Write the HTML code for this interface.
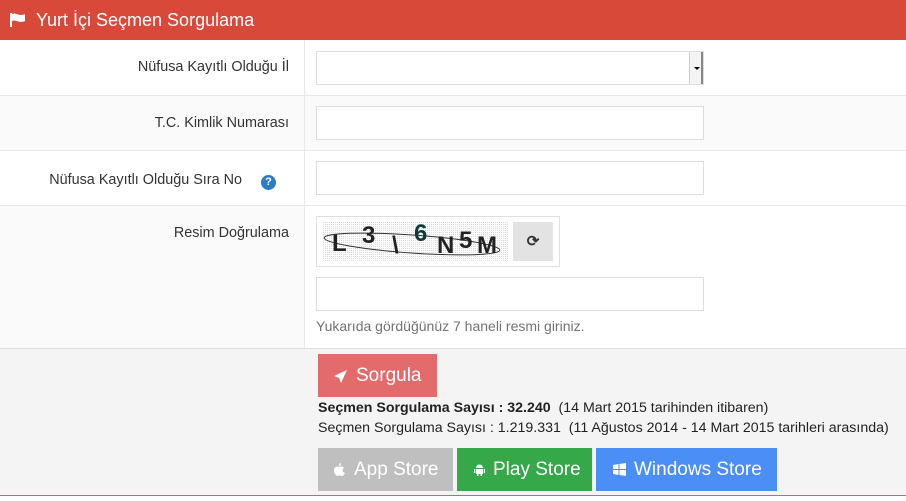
<!DOCTYPE html>
<html><head><meta charset="utf-8"><style>
*{box-sizing:border-box;margin:0;padding:0}
body{width:906px;height:501px;overflow:hidden;background:#fff;font-family:"Liberation Sans",sans-serif;color:#333;position:relative}
.hdr{position:absolute;left:0;top:0;width:906px;height:40px;background:#d9493a;color:#fff;font-size:18px;line-height:40px;padding-left:36px}
.row{position:absolute;left:0;width:906px;border-bottom:1px solid #e8e8e8}
.lab{position:absolute;left:0;width:305px;height:100%;border-right:1px solid #e8e8e8;text-align:right;font-size:14.4px;padding-right:15px}
.inp{position:absolute;left:316px;width:388px;height:34px;border:1px solid #ddd;background:#fff}
.foot{position:absolute;left:0;top:348px;width:906px;height:148px;background:#f4f4f4;border-top:1px solid #e0e0e0;border-bottom:1px solid #e06050}
.btn{position:absolute;color:#fff;font-size:19px;line-height:43px;height:43px}
.btn svg{position:absolute}
</style></head><body>
<div class="hdr"><svg style="position:absolute;left:10px;top:13px" width="16" height="14" viewBox="0 0 16 14"><rect x="0" y="0" width="2" height="14" fill="#fff"/><path d="M2 1C6 -1 9 4 15 1V8C9 11 6 6 2 8Z" fill="#fff"/></svg>Yurt İçi Seçmen Sorgulama</div>
<div class="row" style="top:40px;height:56px"><div class="lab" style="line-height:55px">Nüfusa Kayıtlı Olduğu İl</div>
<div class="inp" style="top:11px;height:34px"><div style="position:absolute;right:0;top:0;width:14px;height:32px;background:#f4f4f4;border-left:1px solid #ccc;border-right:2px solid #888"><div style="position:absolute;left:4px;top:15px;border:3px solid transparent;border-top:3px solid #000"></div></div></div></div>
<div class="row" style="top:96px;height:55px;background:#fafafa"><div class="lab" style="line-height:54px">T.C. Kimlik Numarası</div><div class="inp" style="top:10px"></div></div>
<div class="row" style="top:151px;height:55px"><div class="lab" style="line-height:58px;padding-right:62px">Nüfusa Kayıtlı Olduğu Sıra No</div>
<div style="position:absolute;left:261px;top:24px;width:15px;height:15px;border-radius:50%;background:#2b7bc9;color:#fff;font-size:11px;font-weight:bold;text-align:center;line-height:15px">?</div>
<div class="inp" style="top:10px"></div></div>
<div class="row" style="top:206px;height:142px;border-bottom:none"><div class="lab" style="background:#fafafa;padding-top:18px;line-height:18px">Resim Doğrulama</div>
<div style="position:absolute;left:316px;top:10px;width:244px;height:51px;border:1px solid #e0e0e0;background:#fff">
<div style="position:absolute;left:5px;top:5px;width:186px;height:40px;background:#d8d8d8;background-image:repeating-linear-gradient(0deg,#fff 0 1px,transparent 1px 2px),repeating-linear-gradient(90deg,#fff 0 1px,transparent 1px 2px);font-family:'Liberation Sans';font-size:24px;font-weight:bold;color:#222;overflow:hidden">
<svg width="186" height="40" style="position:absolute;left:0;top:0"><ellipse cx="90" cy="22" rx="88" ry="9" fill="none" stroke="#333" stroke-width="1" transform="rotate(4 90 22)"/></svg>
<span style="position:absolute;left:10px;top:8px">L</span><span style="position:absolute;left:40px;top:0">3</span><span style="position:absolute;left:70px;top:10px">\</span><span style="position:absolute;left:92px;top:-2px;color:#0b3b3b">6</span><span style="position:absolute;left:115px;top:10px">N</span><span style="position:absolute;left:137px;top:5px">5</span><span style="position:absolute;left:155px;top:10px">M</span></div>
<div style="position:absolute;left:196px;top:5px;width:40px;height:39px;background:#e3e3e3;text-align:center;line-height:39px;font-size:15px;color:#333;font-weight:bold">⟳</div></div>
<div class="inp" style="top:71px"></div>
<div style="position:absolute;left:316px;top:112px;font-size:14px;color:#737373">Yukarıda gördüğünüz 7 haneli resmi giriniz.</div></div>
<div class="foot">
<div class="btn" style="left:318px;top:5px;width:119px;background:#e46b6b;padding-left:38px"><svg style="left:16px;top:16px" width="13" height="13" viewBox="0 0 13 13"><path d="M13 0L0 6L5 8L7 13Z" fill="#fff"/></svg>Sorgula</div>
<div style="position:absolute;left:318px;top:51px;font-size:14.2px;color:#222"><b>Seçmen Sorgulama Sayısı : 32.240</b>&nbsp; (14 Mart 2015 tarihinden itibaren)</div>
<div style="position:absolute;left:318px;top:71px;font-size:14.2px;color:#222">Seçmen Sorgulama Sayısı : 1.219.331&nbsp; (11 Ağustos 2014 - 14 Mart 2015 tarihleri arasında)</div>
<div class="btn" style="left:318px;top:99px;width:135px;background:#bfbfbf;padding-left:36px"><svg style="left:16px;top:15px" width="11" height="13" viewBox="0 0 11 13"><path d="M7 0C7 2 6 3 5 3C5 1 6 0 7 0ZM5.5 4C7 3 9 3 10 5C8 6 8 9 11 10C10 12 9 13 8 13C7 13 6 12.5 5.5 12.5C5 12.5 4 13 3 13C1 12 0 9 0 7C0 4 3 3 5.5 4Z" fill="#fff"/></svg>App Store</div>
<div class="btn" style="left:457px;top:99px;width:135px;background:#35a84a;padding-left:36px"><svg style="left:17px;top:15px" width="11" height="13" viewBox="0 0 11 13"><path d="M2 5A3.5 3.5 0 0 1 9 5Z M2 6H9V11H2Z M0 6H1.3V10H0Z M9.7 6H11V10H9.7Z M3 11H4.5V13H3Z M6.5 11H8V13H6.5Z" fill="#fff"/></svg>Play Store</div>
<div class="btn" style="left:596px;top:99px;width:181px;background:#4b8ef5;padding-left:38px"><svg style="left:17px;top:15px" width="13" height="13" viewBox="0 0 13 13"><path d="M0 2L5.5 1V6H0ZM6.5 1L13 0V6H6.5ZM0 7H5.5V12L0 11ZM6.5 7H13V13L6.5 12Z" fill="#fff"/></svg>Windows Store</div>
</div>
</body></html>
